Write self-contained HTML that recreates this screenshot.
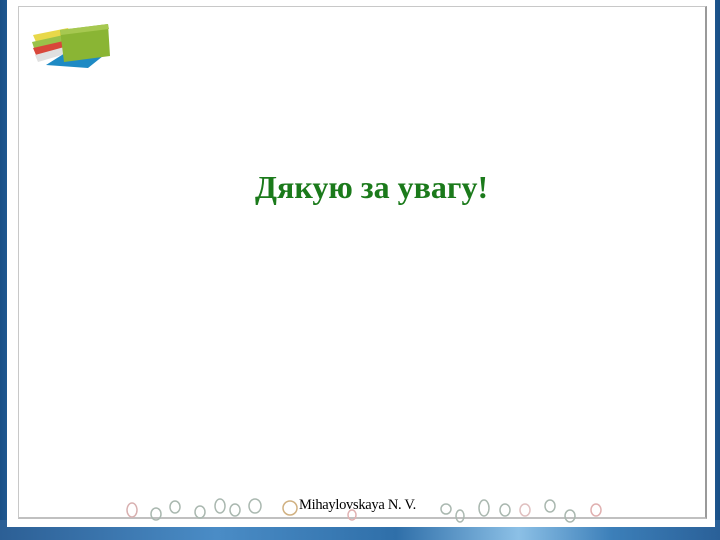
<!DOCTYPE html>
<html><head><meta charset="utf-8"><style>
html,body{margin:0;padding:0;}
body{width:720px;height:540px;position:relative;overflow:hidden;
background:linear-gradient(90deg,#1a4f86 0%,#2a6aa5 3%,#3c83bd 50%,#2a6aa5 97%,#1a4f86 100%);}
.bot{position:absolute;left:0;top:520px;width:720px;height:20px;background:linear-gradient(90deg,#2c5f95,#4a8cc6 30%,#2f6fa9 55%,#8cc0e6 72%,#3c7fb9 85%,#2a6098);}
.outer{position:absolute;left:7px;top:0;width:708px;height:527px;background:#fff;}
.inner{position:absolute;left:18px;top:6px;width:686px;height:510px;border:1px solid #c8c8c8;border-right:2px solid #9a9a9a;border-bottom:2px solid #c0c0c0;background:#fff;}
.title{position:absolute;left:255px;top:169px;white-space:nowrap;font:bold 32px "Liberation Serif",serif;color:#1b7a1b;}
.foot{position:absolute;left:299px;top:497px;font:14.5px "Liberation Serif",serif;color:#000;letter-spacing:-0.3px;white-space:nowrap;}
</style></head><body>
<div class="bot"></div>
<div class="outer"></div>
<div class="inner"></div>
<svg style="position:absolute;left:28px;top:10px" width="90" height="60">
<polygon points="5,25 40,18 44,24 8,32" fill="#e8d84a"/>
<polygon points="4,32 40,24 44,30 6,38" fill="#9ac24a"/>
<polygon points="5,38 40,30 44,36 8,45" fill="#d8473a"/>
<polygon points="7,45 40,36 44,42 10,52" fill="#e0e0e0"/>
<polygon points="18,55 45,38 80,42 60,58" fill="#1e8ac4"/>
<polygon points="32,20 80,14 82,46 36,52" fill="#8ab534"/>
<polygon points="32,20 80,14 81,19 33,25" fill="#a6c850"/>
</svg>
<div class="title">Дякую за увагу!</div>
<svg style="position:absolute;left:120px;top:492px" width="490" height="32" fill="none" stroke="#aab8b0" stroke-width="1.5">
<ellipse cx="12" cy="18" rx="5" ry="7" stroke="#d8b0b0"/><ellipse cx="36" cy="22" rx="5" ry="6"/><ellipse cx="55" cy="15" rx="5" ry="6"/><ellipse cx="80" cy="20" rx="5" ry="6"/><ellipse cx="100" cy="14" rx="5" ry="7"/><ellipse cx="115" cy="18" rx="5" ry="6"/><ellipse cx="135" cy="14" rx="6" ry="7"/><ellipse cx="170" cy="16" rx="7" ry="7" stroke="#d0b080"/><ellipse cx="232" cy="23" rx="4" ry="5" stroke="#e0b0b0"/>
<ellipse cx="326" cy="17" rx="5" ry="5"/><ellipse cx="340" cy="24" rx="4" ry="6"/><ellipse cx="364" cy="16" rx="5" ry="8"/><ellipse cx="385" cy="18" rx="5" ry="6"/><ellipse cx="405" cy="18" rx="5" ry="6" stroke="#e0c0c0"/><ellipse cx="430" cy="14" rx="5" ry="6"/><ellipse cx="450" cy="24" rx="5" ry="6"/><ellipse cx="476" cy="18" rx="5" ry="6" stroke="#e0b0b0"/>
</svg>
<div class="foot">Mihaylovskaya N. V.</div>
</body></html>
